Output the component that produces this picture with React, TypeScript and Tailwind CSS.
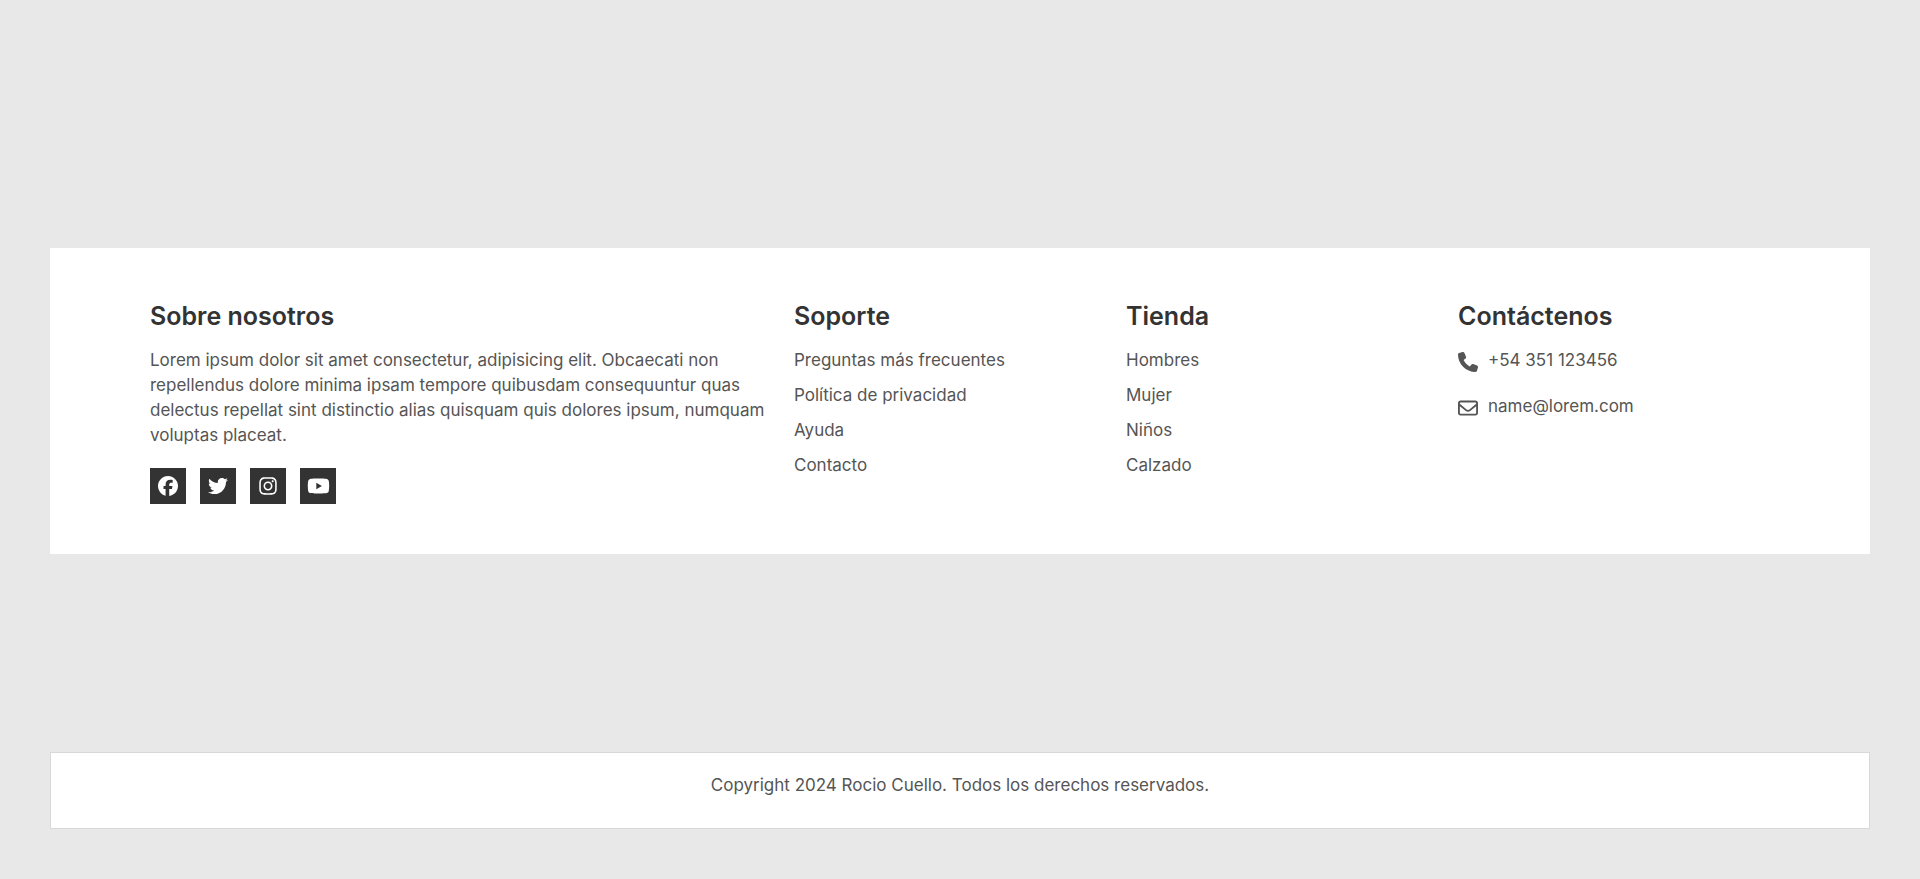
import type { ReactNode } from "react";
import {
  FaFacebook,
  FaInstagram,
  FaPhone,
  FaRegEnvelope,
  FaTwitter,
  FaYoutube,
} from "react-icons/fa6";

const social = [
  { label: "Facebook", icon: <FaFacebook className="h-5 w-5" /> },
  { label: "Twitter", icon: <FaTwitter className="h-5 w-5" /> },
  { label: "Instagram", icon: <FaInstagram className="h-5 w-5" /> },
  { label: "YouTube", icon: <FaYoutube className="h-5 w-[23px]" /> },
];

const support = ["Preguntas más frecuentes", "Política de privacidad", "Ayuda", "Contacto"];
const shop = ["Hombres", "Mujer", "Niños", "Calzado"];

function Column({ title, children }: { title: string; children: ReactNode }) {
  return (
    <div>
      <h2 className="mb-3.5 text-[25px] leading-9 font-semibold text-[#333]">{title}</h2>
      {children}
    </div>
  );
}

function LinkList({ items }: { items: string[] }) {
  return (
    <ul className="flex flex-col gap-2.5">
      {items.map((item) => (
        <li key={item}>
          <a href="#" className="block">{item}</a>
        </li>
      ))}
    </ul>
  );
}

export default function App() {
  return (
    <div className="flex min-h-screen flex-col bg-[#e8e8e8] p-[50px] font-['Inter',sans-serif] text-[17px] leading-[25px] text-[#555]">
      <footer className="my-auto grid grid-cols-[2fr_1fr_1fr_1fr] gap-5 bg-white px-[100px] py-[50px]">
        <Column title="Sobre nosotros">
          <p>
            Lorem ipsum dolor sit amet consectetur, adipisicing elit. Obcaecati non repellendus
            dolore minima ipsam tempore quibusdam consequuntur quas delectus repellat sint
            distinctio alias quisquam quis dolores ipsum, numquam voluptas placeat.
          </p>
          <ul className="mt-5 flex gap-3.5">
            {social.map(({ label, icon }) => (
              <li key={label}>
                <a
                  href="#"
                  aria-label={label}
                  className="flex h-9 w-9 items-center justify-center bg-[#333] text-white"
                >
                  {icon}
                </a>
              </li>
            ))}
          </ul>
        </Column>
        <Column title="Soporte">
          <LinkList items={support} />
        </Column>
        <Column title="Tienda">
          <LinkList items={shop} />
        </Column>
        <Column title="Contáctenos">
          <ul className="flex flex-col gap-[21px]">
            <li>
              <a href="#" className="flex items-start gap-2.5">
                <FaPhone className="mt-1 h-5 w-5" />
                +54 351 123456
              </a>
            </li>
            <li>
              <a href="#" className="flex items-start gap-2.5">
                <FaRegEnvelope className="mt-1 h-5 w-5" />
                name@lorem.com
              </a>
            </li>
          </ul>
        </Column>
      </footer>
      <div className="border border-[#d8d8d8] bg-white px-[100px] pt-5 pb-[30px] text-center">
        <p>Copyright 2024 Rocio Cuello. Todos los derechos reservados.</p>
      </div>
    </div>
  );
}
